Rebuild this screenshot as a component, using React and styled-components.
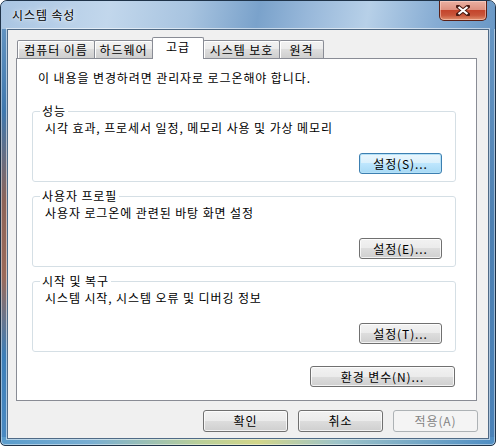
import React from "react";
import styled, { createGlobalStyle, css } from "styled-components";

const Global = createGlobalStyle`
  html, body { margin: 0; padding: 0; background: #fff; }
  body { font-family: "Noto Sans CJK KR", "Noto Sans", sans-serif; font-size: 12px; letter-spacing: 0.9px; color: #000; }
  * { box-sizing: border-box; }
`;

const Window = styled.div`
  width: 496px;
  height: 446px;
  display: flex;
  flex-direction: column;
  padding: 0 6px 6px 6px;
  border: 1px solid #1f3349;
  border-radius: 7px 7px 5px 5px;
  box-shadow: inset 0 0 0 1px rgba(255, 255, 255, 0.45);
  background:
    linear-gradient(to right, #5a9ccc 0%, #79aed2 18%, #b9cf9a 40%, #d2d68a 52%, #9ec3c8 68%, #4f8ec4 100%) bottom / 100% 8px no-repeat,
    linear-gradient(to bottom, #6e9cc7 0%, #3f78ae 25%, #8d6459 45%, #9b6a5a 62%, #3d7fb9 80%, #4b8ac2 100%) left / 8px 100% no-repeat,
    linear-gradient(to bottom, #6a99c6 0%, #4d80b2 50%, #4a82b8 100%);
  overflow: hidden;
`;

const TitleBar = styled.div`
  height: 28px;
  margin: 0 -6px;
  padding: 0 8px 0 11px;
  display: flex;
  align-items: flex-start;
  justify-content: space-between;
  background: linear-gradient(100deg, #a9c5e2 0%, #c2d7ec 22%, #a8c4e0 38%, #7aa2cb 52%, #98b8da 62%, #b7d0e8 74%, #86acd3 88%, #6a98c6 100%);
`;

const Title = styled.span`
  padding-top: 7px;
  font-size: 12px;
  line-height: 14px;
  color: #000;
  text-shadow: 0 0 6px rgba(255, 255, 255, 0.9), 0 0 2px rgba(255, 255, 255, 0.9);
`;

const CloseButton = styled.div`
  width: 48px;
  height: 20px;
  display: flex;
  align-items: center;
  justify-content: center;
  border: 1px solid #5a1f15;
  border-top: none;
  border-radius: 0 0 5px 5px;
  background: linear-gradient(to bottom, #eab0a2 0%, #de9180 45%, #c4452c 50%, #c8553a 75%, #e0906e 100%);
  box-shadow: inset 0 0 0 1px rgba(255, 220, 210, 0.5);
`;

const Client = styled.div`
  flex: 1;
  display: flex;
  flex-direction: column;
  background: #f0f0f0;
  border: 1px solid #4f6a86;
  box-shadow: 0 0 0 1px rgba(255, 255, 255, 0.55);
`;

const TabStrip = styled.div`
  display: flex;
  align-items: flex-end;
  height: 21px;
  margin: 7px 0 0 9px;
`;

const Tab = styled.div`
  width: ${({ $w }) => $w}px;
  height: 18px;
  display: flex;
  align-items: center;
  justify-content: center;
  line-height: 14px;
  border: 1px solid #898c95;
  border-bottom: none;
  margin-left: -1px;
  border-radius: 2px 2px 0 0;
  background: linear-gradient(to bottom, #f2f2f2 0%, #ebebeb 50%, #dddddd 50%, #cfcfcf 100%);
  box-shadow: inset 1px 1px 0 #fff;
  &:first-child { margin-left: 0; }
  ${({ $active }) =>
    $active &&
    css`
      height: 22px;
      margin-bottom: -1px;
      padding-bottom: 4px;
      background: #fff;
      box-shadow: none;
      position: relative;
      z-index: 1;
    `}
`;

const Panel = styled.div`
  width: 461px;
  height: 343px;
  margin-left: 8px;
  padding: 12px 20px 0 15px;
  display: flex;
  flex-direction: column;
  background: #fff;
  border: 1px solid #898c95;
`;

const Info = styled.div`
  line-height: 14px;
  margin-left: 6px;
`;

const Group = styled.fieldset`
  width: 424px;
  margin: ${({ $top }) => $top}px 0 0 0;
  padding: 3px 13px 7px 12px;
  border: 1px solid #d5dfe5;
  border-radius: 3px;
  min-inline-size: 0;
`;

const Legend = styled.legend`
  margin-left: -5px;
  padding: 0 2px;
  line-height: 14px;
`;

const Desc = styled.div`
  line-height: 14px;
`;

const ButtonRow = styled.div`
  display: flex;
  justify-content: flex-end;
  gap: ${({ $gap }) => $gap || 0}px;
  margin-top: ${({ $top }) => $top || 0}px;
  padding-right: ${({ $right }) => $right || 0}px;
`;

const Button = styled.div`
  width: ${({ $w }) => $w}px;
  height: ${({ $h }) => $h || 21}px;
  display: flex;
  align-items: center;
  justify-content: center;
  line-height: 14px;
  border: 1px solid #707070;
  border-radius: 3px;
  background: linear-gradient(to bottom, #f2f2f2 0%, #ebebeb 50%, #dddddd 50%, #cfcfcf 100%);
  box-shadow: inset 0 0 0 1px rgba(255, 255, 255, 0.75);
  ${({ $focus }) =>
    $focus &&
    css`
      border-color: #3c7fb1;
      background: linear-gradient(to bottom, #eaf6fd 0%, #d9f0fc 50%, #bee6fd 50%, #a7d9f5 100%);
      box-shadow: inset 0 0 0 1px #b5e1f7;
    `}
  ${({ $disabled }) =>
    $disabled &&
    css`
      border-color: #adb2b5;
      background: #f4f4f4;
      color: #838383;
      box-shadow: none;
    `}
`;

const Footer = styled(ButtonRow)`
  margin-top: 9px;
`;

const groups = [
  { title: "성능", desc: "시각 효과, 프로세서 일정, 메모리 사용 및 가상 메모리", btn: "설정(S)...", focus: true, top: 19 },
  { title: "사용자 프로필", desc: "사용자 로그온에 관련된 바탕 화면 설정", btn: "설정(E)...", top: 7 },
  { title: "시작 및 복구", desc: "시스템 시작, 시스템 오류 및 디버깅 정보", btn: "설정(T)...", top: 7 },
];

const tabs = [
  { label: "컴퓨터 이름", w: 78 },
  { label: "하드웨어", w: 59 },
  { label: "고급", w: 52, active: true },
  { label: "시스템 보호", w: 77 },
  { label: "원격", w: 45 },
];

export default function App() {
  return (
    <>
      <Global />
      <Window>
        <TitleBar>
          <Title>시스템 속성</Title>
          <CloseButton>
            <svg width="14" height="11" viewBox="0 0 14 11">
              <path d="M2 1.5 L12 9.5 M12 1.5 L2 9.5" stroke="#4a1a12" strokeWidth="4" strokeLinecap="square" />
              <path d="M2.5 2 L11.5 9 M11.5 2 L2.5 9" stroke="#fff" strokeWidth="2.2" />
            </svg>
          </CloseButton>
        </TitleBar>
        <Client>
          <TabStrip>
            {tabs.map((t) => (
              <Tab key={t.label} $w={t.w} $active={t.active}>
                {t.label}
              </Tab>
            ))}
          </TabStrip>
          <Panel>
            <Info>이 내용을 변경하려면 관리자로 로그온해야 합니다.</Info>
            {groups.map((g) => (
              <Group key={g.title} $top={g.top}>
                <Legend>{g.title}</Legend>
                <Desc>{g.desc}</Desc>
                <ButtonRow $top={18}>
                  <Button $w={83} $focus={g.focus}>{g.btn}</Button>
                </ButtonRow>
              </Group>
            ))}
            <ButtonRow $top={14} $right={1}>
              <Button $w={145}>환경 변수(N)...</Button>
            </ButtonRow>
          </Panel>
          <Footer $gap={10} $right={10}>
            <Button $w={85} $h={22}>확인</Button>
            <Button $w={85} $h={22}>취소</Button>
            <Button $w={85} $h={22} $disabled>적용(A)</Button>
          </Footer>
        </Client>
      </Window>
    </>
  );
}
